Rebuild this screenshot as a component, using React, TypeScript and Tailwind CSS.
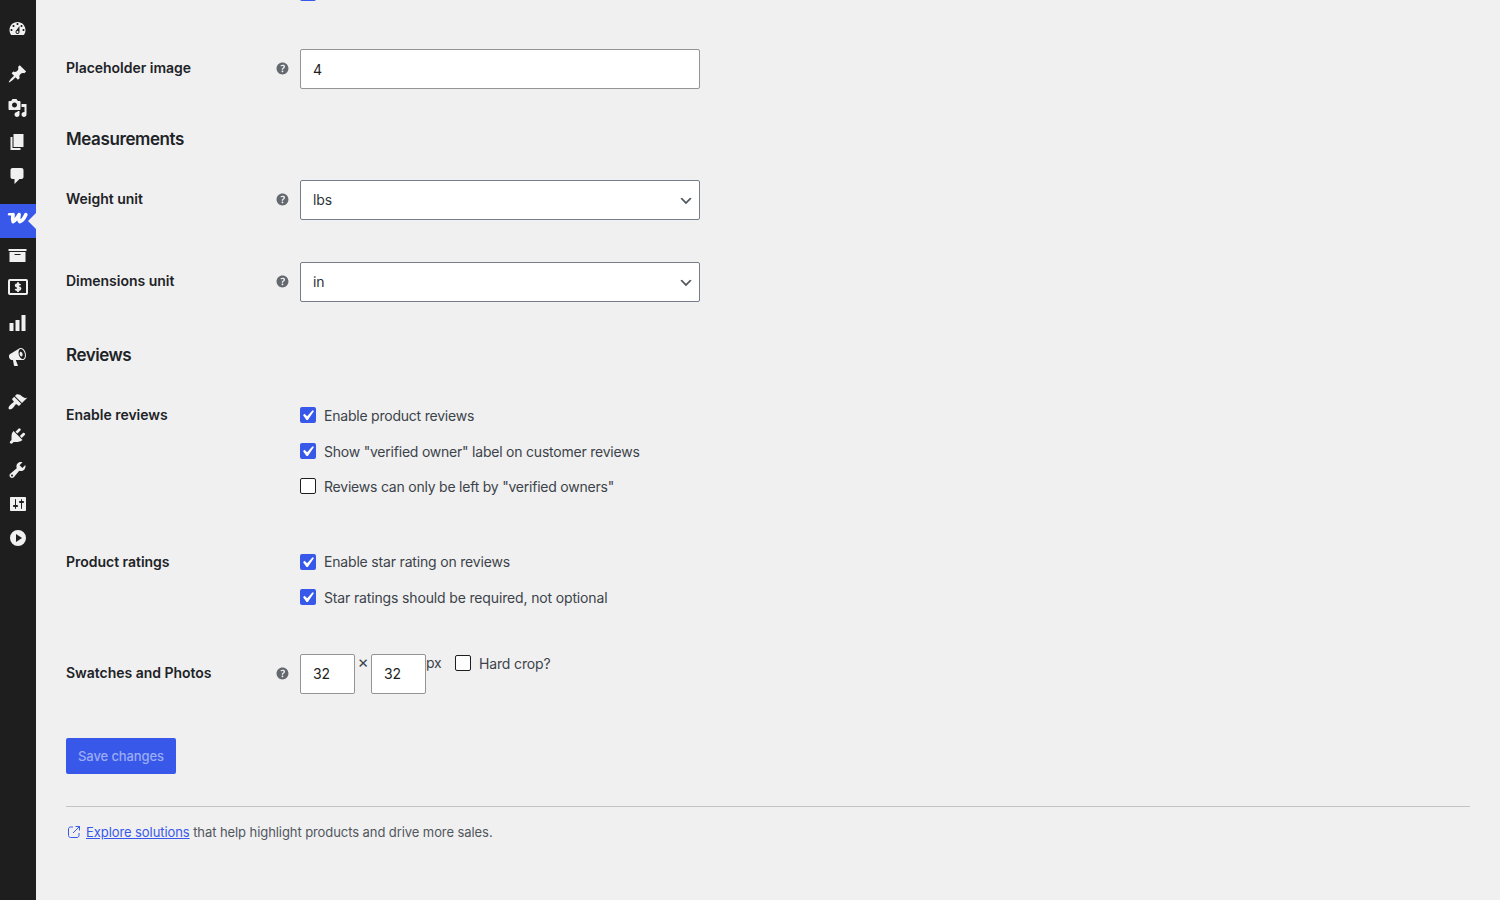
import type { ReactNode } from "react";

const MENU_GROUPS = [
  [
    {
      id: "dashboard",
      d: "M3.76 16h12.48c1.1-1.37 1.76-3.11 1.76-5 0-4.42-3.58-8-8-8s-8 3.58-8 8c0 1.89.66 3.63 1.76 5zM10 4c.55 0 1 .45 1 1s-.45 1-1 1-1-.45-1-1 .45-1 1-1zM6 6c.55 0 1 .45 1 1s-.45 1-1 1-1-.45-1-1 .45-1 1-1zm8 0c.55 0 1 .45 1 1s-.45 1-1 1-1-.45-1-1 .45-1 1-1zm-5.37 5.55L12 7v6c0 1.1-.9 2-2 2s-2-.9-2-2c0-.57.24-1.08.63-1.45zM4 10c.55 0 1 .45 1 1s-.45 1-1 1-1-.45-1-1 .45-1 1-1zm12 0c.55 0 1 .45 1 1s-.45 1-1 1-1-.45-1-1 .45-1 1-1zm-5 3c0-.55-.45-1-1-1s-1 .45-1 1 .45 1 1 1 1-.45 1-1z",
    },
  ],
  [
    {
      id: "posts",
      d: "M10.44 3.02l1.82-1.82 6.36 6.35-1.83 1.82c-1.05-.68-2.48-.57-3.41.36l-.75.75c-.92.93-1.04 2.35-.35 3.41l-1.83 1.82-2.41-2.41-2.8 2.79c-.42.42-3.38 2.71-3.8 2.29s1.86-3.39 2.28-3.81l2.79-2.79L4.1 9.36l1.83-1.82c1.05.69 2.48.57 3.4-.36l.75-.75c.93-.92 1.05-2.35.36-3.41z",
    },
    {
      id: "media",
      d: "M13 11V4c0-.55-.45-1-1-1h-1.67L9 1H5L3.67 3H2c-.55 0-1 .45-1 1v7c0 .55.45 1 1 1h10c.55 0 1-.45 1-1zM7 4.5c1.38 0 2.5 1.12 2.5 2.5S8.38 9.5 7 9.5 4.5 8.38 4.5 7 5.62 4.5 7 4.5zM14 6h5v10.5c0 1.38-1.12 2.5-2.5 2.5S14 17.88 14 16.5s1.12-2.5 2.5-2.5c.17 0 .34.02.5.05V9h-3V6zm-4 8.05V13h2v3.5c0 1.38-1.12 2.5-2.5 2.5S7 17.88 7 16.5 8.12 14 9.5 14c.17 0 .34.02.5.05z",
    },
    { id: "pages", d: "M6 15V2h10v13H6zm-1 1h8v2H3V5h2v11z" },
    {
      id: "comments",
      d: "M5 2h9c1.1 0 2 .9 2 2v7c0 1.1-.9 2-2 2h-2l-5 5v-5H5c-1.1 0-2-.9-2-2V4c0-1.1.9-2 2-2z",
    },
  ],
  [
    { id: "woo", d: "" },
    { id: "products", d: "M19 4v2H1V4h18zM2 7h16v10H2V7zm11 3V9H7v1h6z" },
    { id: "payments", d: "" },
    { id: "analytics", d: "M18 18V2h-4v16h4zm-6 0V7H8v11h4zm-6 0v-8H2v8h4z" },
    {
      id: "marketing",
      d: "M18.15 5.94c.46 1.62.38 3.22-.02 4.48-.42 1.28-1.26 2.18-2.3 2.48-.16.06-.26.06-.4.06-.06.02-.12.02-.18.02-.06.02-.14.02-.22.02h-6.8l2.22 5.5c.02.14-.06.26-.14.34-.08.1-.24.16-.34.16H6.95c-.1 0-.26-.06-.34-.16-.08-.08-.16-.2-.14-.34l-1-5.5H4.25l-.02-.02c-.5.06-1.08-.18-1.54-.62s-.88-1.08-1.06-1.88c-.24-.8-.2-1.56-.02-2.2.18-.62.58-1.08 1.06-1.3l.02-.02 9-5.4c.1-.06.18-.1.24-.16.06-.04.14-.08.24-.12.16-.08.28-.12.5-.18 1.04-.3 2.24.1 3.22.98s1.84 2.24 2.26 3.86zm-2.58 5.98h-.02c.4-.1.74-.34 1.04-.7.58-.7.86-1.76.86-3.04 0-.64-.1-1.3-.28-1.98-.34-1.36-1.02-2.5-1.78-3.24s-1.68-1.1-2.46-.88c-.82.22-1.4.96-1.7 2-.32 1.04-.28 2.36.06 3.72.38 1.36 1 2.5 1.8 3.24.78.74 1.62 1.1 2.48.88zm-2.54-7.08c.22-.04.42-.02.62.04.38.16.76.48 1.02 1s.42 1.2.42 1.78c0 .3-.04.56-.12.8-.18.48-.44.84-.86.94-.34.1-.8-.06-1.14-.4s-.64-.86-.78-1.5c-.18-.62-.12-1.24.02-1.72s.48-.84.82-.94z",
    },
  ],
  [
    {
      id: "appearance",
      d: "M14.48 11.06L7.41 3.99l1.5-1.5c.5-.56 2.3-.47 3.51.32 1.21.8 1.43 1.28 2.91 2.1 1.18.64 2.45 1.26 4.45.85zm-.71.71L6.7 4.7 4.93 6.47c-.39.39-.39 1.02 0 1.41l1.06 1.06c.39.39.39 1.03 0 1.42-.6.6-1.43 1.11-2.21 1.69-.35.26-.7.53-1.01.84C1.43 14.23.4 16.08 1.4 17.07c.99 1 2.84-.03 4.18-1.36.31-.31.58-.66.85-1.02.57-.78 1.08-1.61 1.69-2.21.39-.39 1.02-.39 1.41 0l1.06 1.06c.39.39 1.02.39 1.41 0z",
    },
    {
      id: "plugins",
      d: "M13.11 4.36L9.87 7.6 8 5.73l3.24-3.24c.35-.34 1.05-.2 1.56.32.52.51.66 1.21.31 1.55zm-8 1.77l.91-1.12 9.01 9.01-1.19.84c-.71.71-2.63 1.16-3.82 1.16H6.14L4.9 17.26c-.59.59-1.54.59-2.12 0-.59-.58-.59-1.53 0-2.12l1.24-1.24v-3.88c0-1.13.4-3.19 1.09-3.89zm7.26 3.97l3.24-3.24c.34-.35 1.04-.21 1.55.31.52.51.66 1.21.31 1.55l-3.24 3.25z",
    },
    {
      id: "tools",
      d: "M16.68 9.77c-1.34 1.34-3.3 1.67-4.95.99l-5.41 6.52c-.99.99-2.59.99-3.58 0s-.99-2.59 0-3.57l6.52-5.42c-.68-1.65-.35-3.61.99-4.95 1.28-1.28 3.12-1.62 4.72-1.06l-2.89 2.89 2.82 2.82 2.86-2.87c.53 1.58.18 3.39-1.08 4.65zM3.81 16.21c.4.39 1.04.39 1.43 0 .4-.4.4-1.04 0-1.43-.39-.4-1.03-.4-1.43 0-.39.39-.39 1.03 0 1.43z",
    },
    {
      id: "settings",
      d: "M18 16V4c0-.55-.45-1-1-1H3c-.55 0-1 .45-1 1v12c0 .55.45 1 1 1h14c.55 0 1-.45 1-1zM8 11h1c.55 0 1 .45 1 1s-.45 1-1 1H8v1.5c0 .28-.22.5-.5.5s-.5-.22-.5-.5V13H6c-.55 0-1-.45-1-1s.45-1 1-1h1V5.5c0-.28.22-.5.5-.5s.5.22.5.5V11zm5-2h-1c-.55 0-1-.45-1-1s.45-1 1-1h1V5.5c0-.28.22-.5.5-.5s.5.22.5.5V7h1c.55 0 1 .45 1 1s-.45 1-1 1h-1v5.500c0 .28-.22.5-.5.5s-.5-.22-.5-.5V9z",
    },
    { id: "collapse", d: "M10 2a8 8 0 1 0 0 16 8 8 0 0 0 0-16zM8 6l6 4-6 4z" },
  ],
];

function MenuIcon({ id, d }: { id: string; d: string }) {
  if (id === "woo") {
    return (
      <svg viewBox="0 0 20 20" className="size-5 overflow-visible" fill="none" stroke="#fff" strokeLinecap="round" strokeLinejoin="round">
        <path d="M2.200 3.300H6" strokeWidth="2.600" />
        <path d="M6 3.600C5.600 6.500 5.500 9 6.100 10.600C8.200 9.700 10.200 6.700 12.100 3.600C11.500 6.500 11.500 9.200 12.700 10.600C15.200 10.200 17.400 7 18.900 3.600" strokeWidth="3.600" />
      </svg>
    );
  }
  if (id === "payments") {
    return (
      <svg viewBox="0 0 20 20" className="size-5 overflow-visible" fill="none" stroke="#f0f0f1">
        <rect x="2" y="1.100" width="18" height="13.900" rx="0.800" strokeWidth="2" />
        <path d="M13.400 6.200C12.900 5.400 12 5.100 11 5.100C9.600 5.100 8.700 5.700 8.700 6.600C8.700 8.600 13.400 7.400 13.400 9.600C13.400 10.600 12.400 11.100 11.100 11.100C9.900 11.100 8.900 10.700 8.400 9.900M11 3.200V12.900" strokeWidth="1.900" />
      </svg>
    );
  }
  return (
    <svg viewBox="0 0 20 20" className="size-5 overflow-visible" fill="#f0f0f1" fillRule="evenodd">
      <path d={d} transform={id === "settings" || id === "collapse" ? undefined : "translate(.5 0)"} />
    </svg>
  );
}

function Sidebar() {
  return (
    <nav className="flex h-full w-9 shrink-0 flex-col gap-[11px] bg-[#1e1e1e] pt-3">
      {MENU_GROUPS.map((group, idx) => (
        <ul key={idx}>
          {group.map(({ id, d }) => (
            <li
              key={id}
              className={`relative flex h-[34px] items-center ${id === "woo" ? "bg-[#3858e9]" : ""} ${
                id === "settings" || id === "collapse" ? "pl-2" : "pl-[7px]"
              }`}
            >
              <MenuIcon id={id} d={d} />
              {id === "woo" && (
                <span className="absolute top-[9px] right-0 border-y-8 border-r-8 border-y-transparent border-r-[#f0f0f0]" />
              )}
            </li>
          ))}
        </ul>
      ))}
    </nav>
  );
}

function HelpTip() {
  return (
    <svg viewBox="0 0 20 20" className="mr-[9px] size-[17px]" fill="#646970">
      <path d="M17 10c0-3.870-3.140-7-7-7-3.870 0-7 3.130-7 7s3.130 7 7 7c3.860 0 7-3.130 7-7zm-6.300 1.480H9.140v-.43c0-.38.08-.7.24-.98s.46-.57.88-.89c.41-.29.68-.53.81-.71.14-.18.2-.39.2-.62 0-.25-.09-.44-.28-.58-.19-.13-.45-.19-.79-.19-.58 0-1.25.19-2 .57l-.64-1.28c.87-.49 1.8-.74 2.77-.74.81 0 1.45.2 1.92.58.48.39.71.91.71 1.55 0 .43-.09.8-.29 1.11-.19.32-.57.67-1.11 1.06-.38.28-.61.49-.71.63-.1.15-.15.34-.15.57v.35zm-1.47 2.74c-.18-.17-.27-.42-.27-.73 0-.33.08-.58.26-.75s.43-.25.77-.25c.32 0 .57.09.75.26s.27.42.27.74c0 .3-.09.55-.27.72-.18.18-.43.27-.75.27-.33 0-.58-.09-.76-.26z" />
    </svg>
  );
}

type RowProps = {
  label: string;
  help?: boolean;
  className: string;
  children: ReactNode;
};

function Row({ label, help, className, children }: RowProps) {
  return (
    <div className={`flex items-start ${className}`}>
      <div className="flex h-[38px] w-[234px] shrink-0 items-center justify-between">
        <span className="text-sm font-semibold tracking-[-0.02px] text-[#1d2327]">{label}</span>
        {help && <HelpTip />}
      </div>
      {children}
    </div>
  );
}

function Select({ value }: { value: string }) {
  return (
    <div className="flex h-10 w-[400px] items-center justify-between rounded-[2px] border border-[#757e8a] bg-white pr-[5px] pl-3 tracking-[-0.15px] text-[#2c3338]">
      <span>{value}</span>
      <svg viewBox="0 0 20 20" className="mt-0.5 size-4" fill="#50575e">
        <path d="M5 6l5 5 5-5 2 1-7 7-7-7 2-1z" />
      </svg>
    </div>
  );
}

function Checkbox({ checked, children }: { checked?: boolean; children: ReactNode }) {
  return (
    <label className="flex h-4 items-center gap-2">
      <span
        className={`flex size-4 shrink-0 items-center justify-center rounded-[2px] ${
          checked ? "bg-[#3858e9]" : "border border-[#1e1e1e] bg-white"
        }`}
      >
        {checked && (
          <svg viewBox="0 0 20 20" className="mr-[1.500px] size-[21px] shrink-0" fill="#fff">
            <path d="M14.830 4.890l1.340.940-5.810 8.380H9.020L5.780 9.670l1.340-1.250 2.570 2.400z" />
          </svg>
        )}
      </span>
      <span className="mt-0.5 whitespace-nowrap">{children}</span>
    </label>
  );
}

export default function App() {
  return (
    <div className="flex h-[900px] w-[1500px] overflow-hidden bg-[#f0f0f0] font-['Inter','Liberation_Sans',sans-serif] text-sm leading-5 text-[#3c434a]">
      <Sidebar />
      <main className="flex-1 px-[30px]">
        <div className="flex h-px items-end overflow-hidden pl-[234px]">
          <span className="size-4 shrink-0 rounded-[2px] bg-[#3858e9]" />
        </div>

        <Row label="Placeholder image" help className="mt-12 h-10">
          <div className="flex h-10 w-[400px] items-center rounded-[2px] border border-[#949494] bg-white px-3 pt-0.5 text-[#1e1e1e]">
            4
          </div>
        </Row>

        <h2 className="mt-[38px] text-[17px] leading-6 font-semibold tracking-[-0.4px] text-[#1d2327]">Measurements</h2>
        <Row label="Weight unit" help className="mt-[29px] h-10">
          <Select value="lbs" />
        </Row>
        <Row label="Dimensions unit" help className="mt-[42px] h-10">
          <Select value="in" />
        </Row>

        <h2 className="mt-[41px] text-[17px] leading-6 font-semibold tracking-[-0.47px] text-[#1d2327]">Reviews</h2>
        <Row label="Enable reviews" className="mt-[29px] h-[98px]">
          <div className="flex flex-col pt-[11px] tracking-[-0.22px]">
            <Checkbox checked>Enable product reviews</Checkbox>
            <div className="mt-5">
              <Checkbox checked>Show "verified owner" label on customer reviews</Checkbox>
            </div>
            <div className="mt-[19px]">
              <Checkbox>Reviews can only be left by "verified owners"</Checkbox>
            </div>
          </div>
        </Row>
        <Row label="Product ratings" className="mt-[49px] h-[62px]">
          <div className="flex flex-col gap-[19px] pt-[11px] tracking-[-0.15px]">
            <Checkbox checked>
              <span className="block pb-0.5 tracking-[-0.18px]">Enable star rating on reviews</span>
            </Checkbox>
            <Checkbox checked>Star ratings should be required, not optional</Checkbox>
          </div>
        </Row>
        <Row label="Swatches and Photos" help className="mt-[49px] h-10">
          <div className="flex items-start tracking-[-0.15px]">
            <div className="flex h-10 w-[55px] items-center rounded-[2px] border border-[#949494] bg-white px-3 text-[#1e1e1e]">
              32
            </div>
            <span className="w-4 text-center text-[17px] leading-4">×</span>
            <div className="flex h-10 w-[55px] items-center rounded-[2px] border border-[#949494] bg-white px-3 text-[#1e1e1e]">
              32
            </div>
            <span className="w-[29px] leading-[18px]">px</span>
            <div className="pt-px">
              <Checkbox>Hard crop?</Checkbox>
            </div>
          </div>
        </Row>

        <button className="mt-11 block h-9 w-[110px] rounded-[2px] bg-[#3858e9] text-[13px] font-medium tracking-[-0.1px] text-[#9cacf4]">
          Save changes
        </button>

        <footer className="mt-8 flex items-center border-t border-[#c3c4c7] pt-[15px] text-[13px] tracking-[-0.08px] text-[#50575e]">
          <svg viewBox="0 0 16 16" className="mr-1 size-4" fill="none" stroke="#3858e9" strokeWidth="1">
            <path d="M7 3H4.500C3.400 3 2.500 3.900 2.500 5V11.500C2.500 12.600 3.400 13.500 4.500 13.500H11C12.100 13.500 13 12.600 13 11.500V9M7 9L13.500 2.500M9.500 2.500H13.500V6.500" />
          </svg>
          <p>
            <a className="text-[#3858e9] underline">Explore solutions</a> that help highlight products and drive more sales.
          </p>
        </footer>
      </main>
    </div>
  );
}
